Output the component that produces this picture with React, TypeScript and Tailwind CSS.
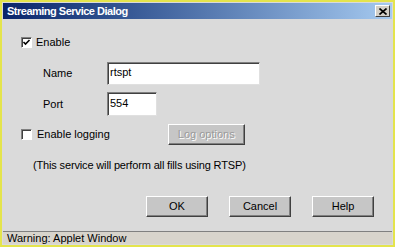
import React from "react";

function Check({ checked }: { checked: boolean }) {
  return (
    <div className="w-[11px] h-[11px] bg-white border-t border-l border-[#808080] border-b border-r border-b-white border-r-white shadow-[inset_1px_1px_0_#404040] flex items-center justify-center">
      {checked && (
        <svg width="9" height="9" viewBox="0 0 9 9">
          <path d="M1.5 4 L3.5 6 L7.5 2" stroke="#000" strokeWidth="1.6" fill="none" />
        </svg>
      )}
    </div>
  );
}

function Btn({ label, w, disabled }: { label: string; w: string; disabled?: boolean }) {
  return (
    <div
      className={`${w} h-[21px] bg-[#c6c6c6] border-t border-l border-white border-r border-b border-r-[#404040] border-b-[#404040] shadow-[inset_-1px_-1px_0_#808080] flex items-center justify-center text-[11px] ${
        disabled ? "text-[#9a9a9a] [text-shadow:1px_1px_0_#ffffff]" : "text-black"
      }`}
    >
      {label}
    </div>
  );
}

export default function App() {
  return (
    <div
      className="w-[395px] h-[247px] border-2 border-[#e4e44c] bg-[#dadada] flex flex-col p-px"
      style={{ fontFamily: '"Liberation Sans", Arial, sans-serif' }}
    >
      <div className="h-[16px] flex items-center bg-gradient-to-r from-[#0a246a] to-[#a6caf0] pl-[4px] pr-[2px]">
        <span className="text-white font-bold text-[11px] leading-none tracking-[-0.5px]">
          Streaming Service Dialog
        </span>
        <div className="ml-auto w-[15px] h-[12px] bg-[#d4d0c8] border-t border-l border-white border-r border-b border-r-[#404040] border-b-[#404040] flex items-center justify-center">
          <svg width="8" height="7" viewBox="0 0 8 7">
            <path d="M0.5 0.5 L7.5 6.5 M7.5 0.5 L0.5 6.5" stroke="#000" strokeWidth="1.6" />
          </svg>
        </div>
      </div>
      <div className="flex-1 flex flex-col text-[11px] text-black">
        <div className="flex items-center mt-[18px] pl-[18px] h-[11px]">
          <Check checked />
          <span className="ml-[4px]">Enable</span>
        </div>
        <div className="flex items-center mt-[14px] h-[23px]">
          <span className="pl-[40px] w-[104px]">Name</span>
          <div className="w-[153px] h-[23px] bg-white border-t border-l border-[#808080] border-r border-b border-r-[#e0e0e0] border-b-[#e0e0e0] shadow-[inset_1px_1px_0_#404040] flex items-center pl-[2px] pb-[2px]">
            rtspt
          </div>
        </div>
        <div className="flex items-center mt-[7px] h-[24px]">
          <span className="pl-[40px] w-[104px]">Port</span>
          <div className="w-[50px] h-[24px] bg-white border-t border-l border-[#808080] border-r border-b border-r-[#e0e0e0] border-b-[#e0e0e0] shadow-[inset_1px_1px_0_#404040] flex items-center pl-[2px] pb-[2px]">
            554
          </div>
        </div>
        <div className="flex items-center mt-[7px] h-[22px] pl-[18px]">
          <Check checked={false} />
          <span className="ml-[5px]">Enable logging</span>
          <div className="ml-[58px]">
            <Btn label="Log options" w="w-[77px]" disabled />
          </div>
        </div>
        <div className="mt-[14px] pl-[30px] h-[13px] leading-[13px] tracking-[-0.15px]">
          (This service will perform all fills using RTSP)
        </div>
        <div className="flex justify-end gap-[21px] mt-[24px] pr-[18px]">
          <Btn label="OK" w="w-[62px]" />
          <Btn label="Cancel" w="w-[62px]" />
          <Btn label="Help" w="w-[62px]" />
        </div>
      </div>
      <div className="h-[13px] border-t border-[#808080] bg-[#d8d4cc] text-[11px] leading-[12px] pl-[4px] text-black">
        Warning: Applet Window
      </div>
    </div>
  );
}
